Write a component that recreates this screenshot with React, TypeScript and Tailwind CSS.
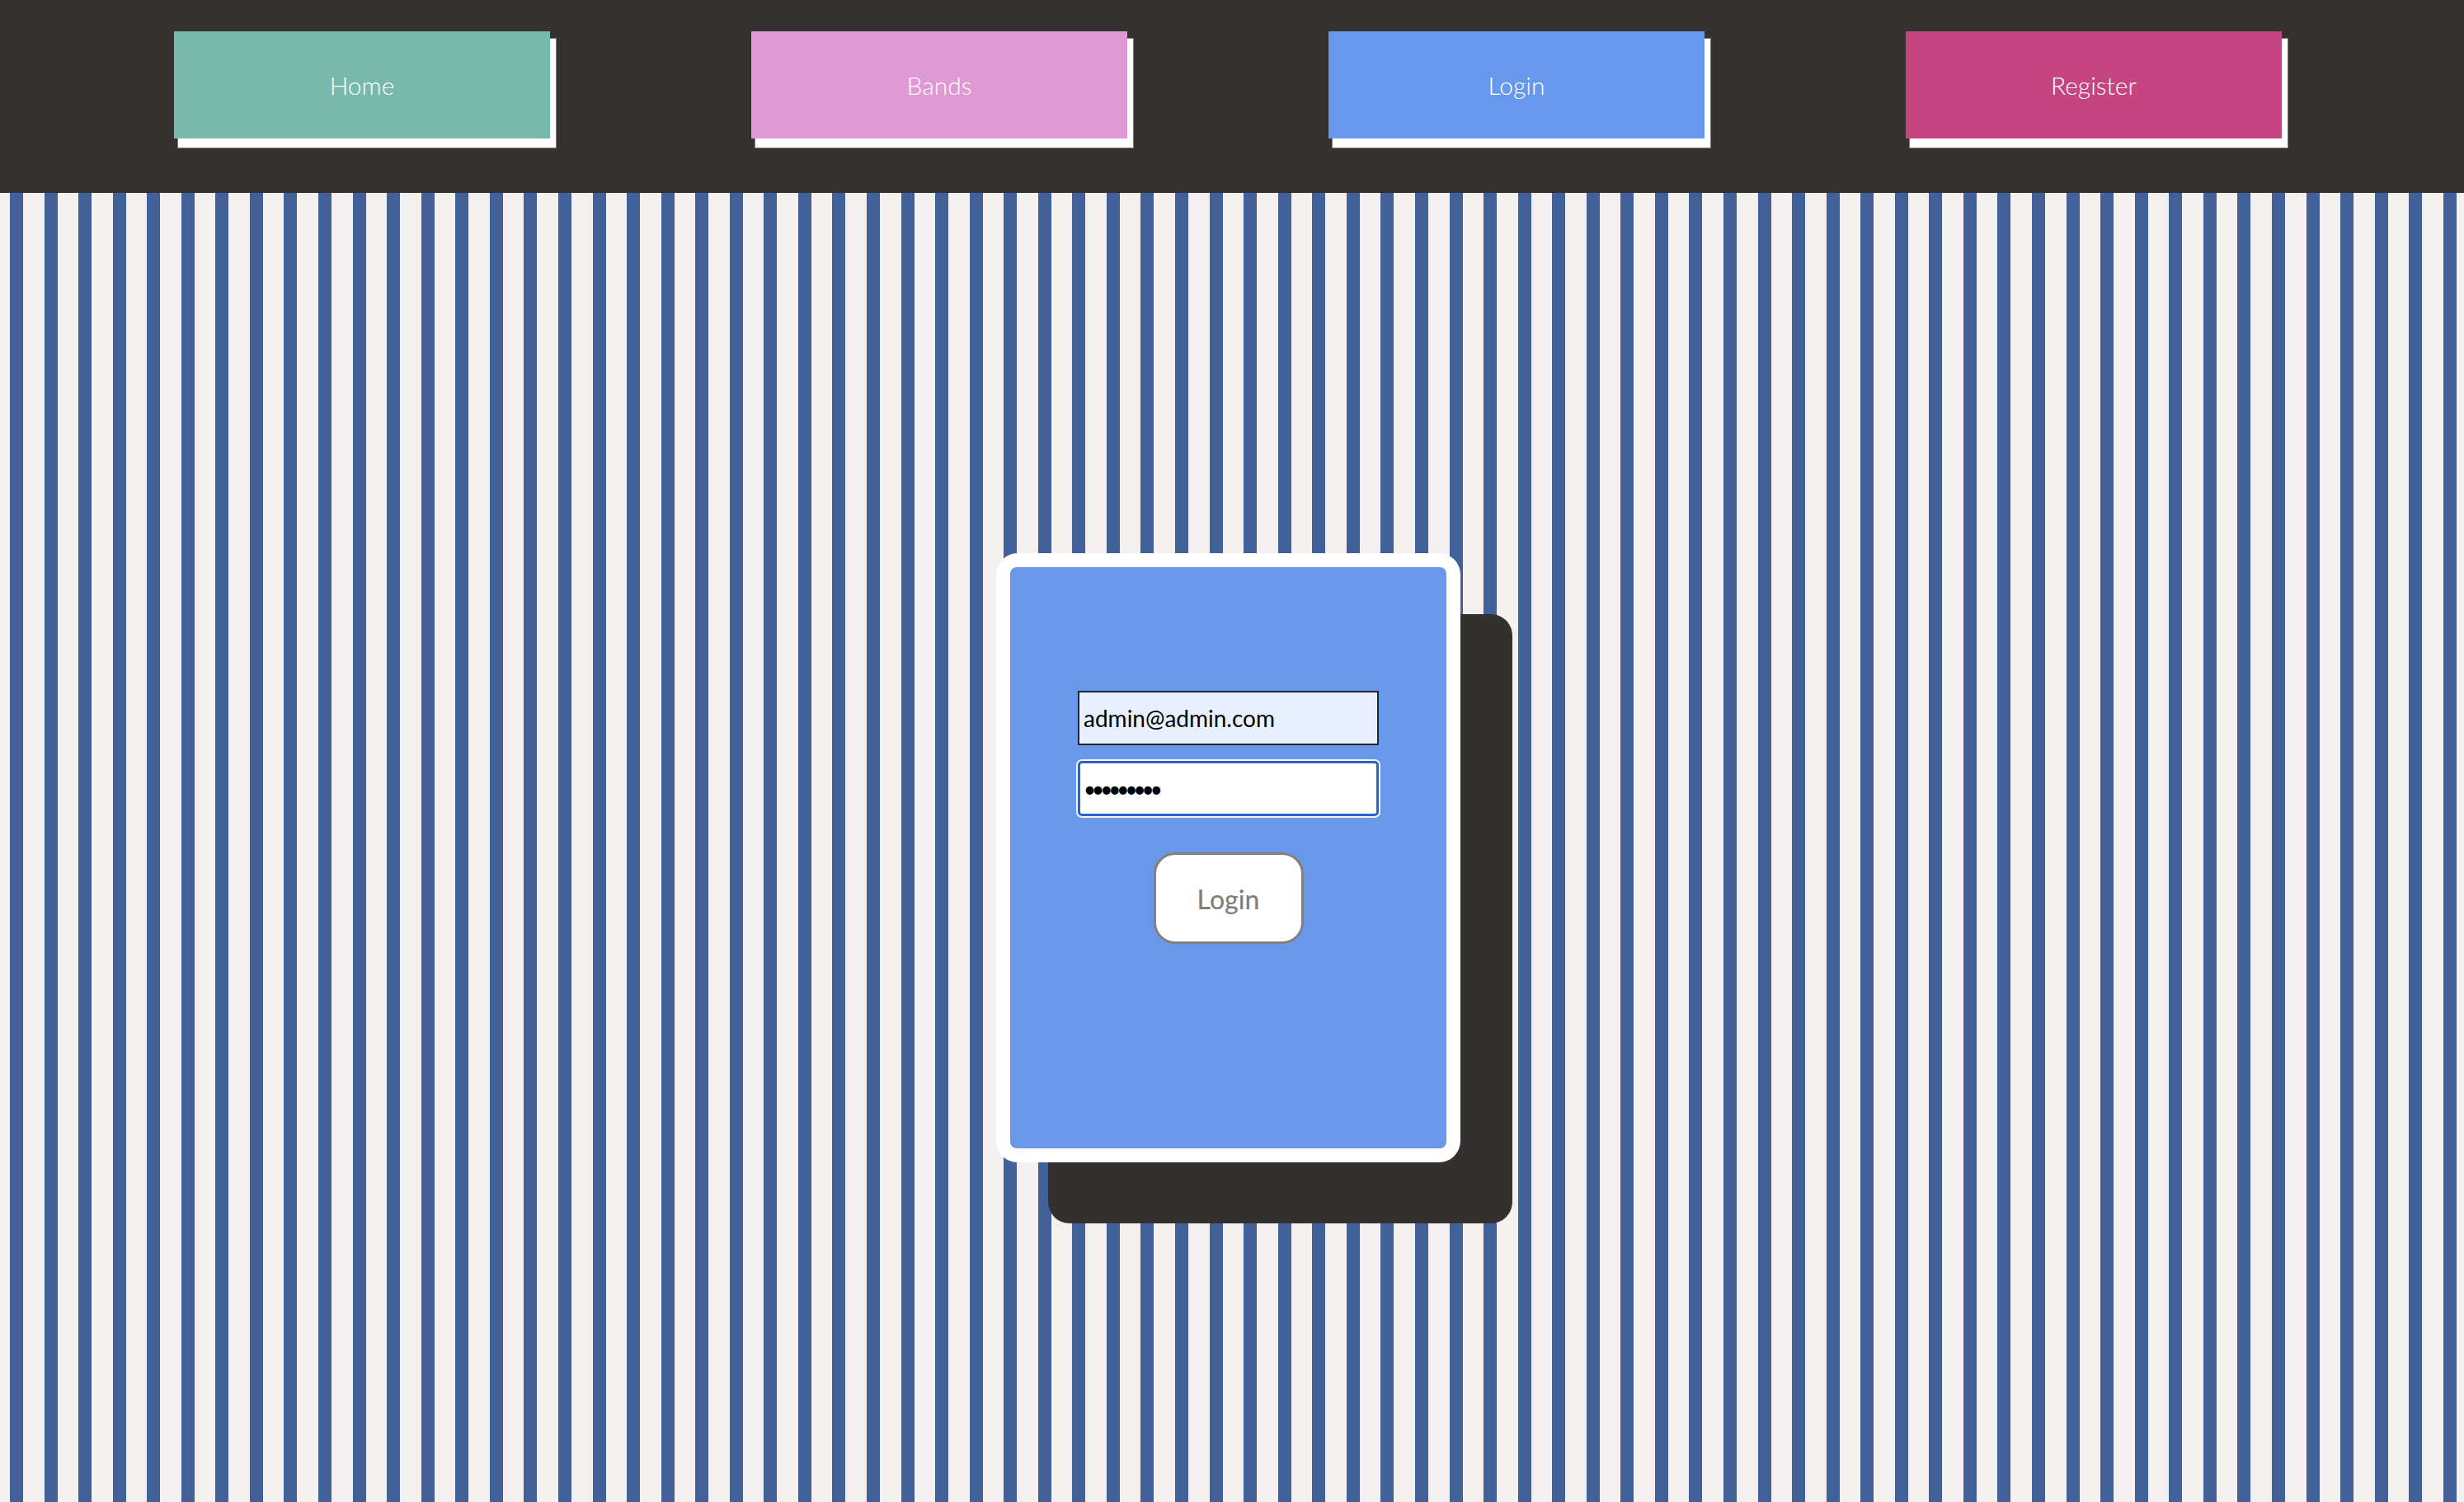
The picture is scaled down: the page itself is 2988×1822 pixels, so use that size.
import React from 'react';

const navItems = [
  { label: 'Home', color: 'bg-[#77b9ab]' },
  { label: 'Bands', color: 'bg-[#df99d4]' },
  { label: 'Login', color: 'bg-[#6898ec]' },
  { label: 'Register', color: 'bg-[#c4457f]' },
];

const NavButton = ({ label, color }: { label: string; color: string }) => (
  <a
    href="#"
    className={`flex h-[130px] w-[456px] items-center justify-center ${color} text-[30px] font-light text-white shadow-[6px_10px_0_1px_#ffffff,6px_10px_0_2px_#7a7a7a]`}
  >
    {label}
  </a>
);

const App = () => {
  return (
    <div className="flex min-h-screen flex-col font-['Lato','Open_Sans',sans-serif]">
      {/* top navigation */}
      <nav className="flex h-[234px] shrink-0 items-start gap-[244px] bg-[#353131] pl-[211px] pt-[38px]">
        {navItems.map((item) => (
          <NavButton key={item.label} label={item.label} color={item.color} />
        ))}
      </nav>

      <main className="flex-1 bg-[image:repeating-linear-gradient(90deg,#f5f0f0_0_12px,#42609a_12px_28px,#f5f0f0_28px_41.56px)] pl-[1208px] pt-[437px]">
        <div className="h-[739px] w-[563px] rounded-[26px] bg-white p-[17px] shadow-[63px_74px_0_#343030]">
          <form
            className="flex h-full flex-col items-center rounded-[8px] bg-[#6998ea] pt-[150px]"
            onSubmit={(e) => e.preventDefault()}
          >
            <input
              type="email"
              defaultValue="admin@admin.com"
              className="h-[66px] w-[365px] border-2 border-[#262626] bg-[#e8f0fe] px-[5px] text-[28px] text-black outline-none"
            />
            <input
              type="password"
              defaultValue="adminpass"
              className="mt-[19px] h-[67px] w-[365px] rounded-[5px] border-[3px] border-[#2b64c9] bg-white px-[4px] text-[26px] tracking-[-5px] text-black shadow-[0_0_0_2px_#f4f7ff] outline-none"
            />
            <button
              type="submit"
              className="mt-[44px] h-[111px] w-[182px] rounded-[26px] border-[3px] border-[#808080] bg-white pt-[2px] text-[32px] font-medium text-[#808080]"
            >
              Login
            </button>
          </form>
        </div>
      </main>
    </div>
  );
};

export default App;
